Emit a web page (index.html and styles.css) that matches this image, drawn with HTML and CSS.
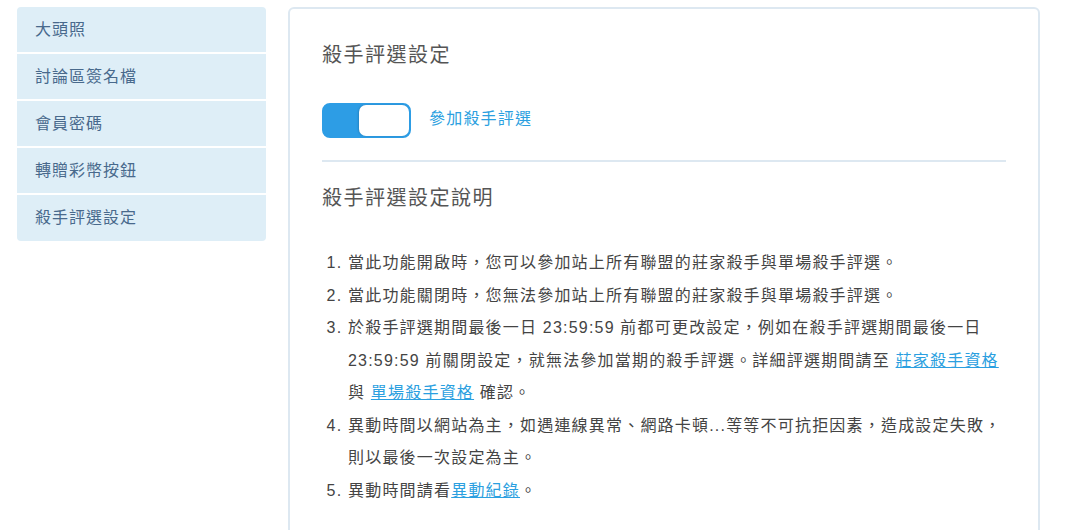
FILE: index.html
```html
<!doctype html>
<html lang="zh-Hant">
<head>
<meta charset="UTF-8">
<title>殺手評選設定</title>
<link rel="stylesheet" href="styles.css">
</head>
<body>
<div class="layout">
  <nav class="side-menu">
    <a class="menu-item" href="#">大頭照</a>
    <a class="menu-item" href="#">討論區簽名檔</a>
    <a class="menu-item" href="#">會員密碼</a>
    <a class="menu-item" href="#">轉贈彩幣按鈕</a>
    <a class="menu-item" href="#">殺手評選設定</a>
  </nav>

  <main class="panel">
    <h2 class="panel-title">殺手評選設定</h2>
    <div class="switch-row">
      <span class="switch"><span class="knob"></span></span>
      <span class="switch-label">參加殺手評選</span>
    </div>
    <hr class="divider">
    <h2 class="panel-title sub">殺手評選設定說明</h2>
    <ol class="notes">
      <li>當此功能開啟時，您可以參加站上所有聯盟的莊家殺手與單場殺手評選。</li>
      <li>當此功能關閉時，您無法參加站上所有聯盟的莊家殺手與單場殺手評選。</li>
      <li>於殺手評選期間最後一日 23:59:59 前都可更改設定，例如在殺手評選期間最後一日 23:59:59 前關閉設定，就無法參加當期的殺手評選。詳細評選期間請至 <a href="#">莊家殺手資格</a> 與 <a href="#">單場殺手資格</a> 確認。</li>
      <li>異動時間以網站為主，如遇連線異常、網路卡頓...等等不可抗拒因素，造成設定失敗，則以最後一次設定為主。</li>
      <li>異動時間請看<a href="#">異動紀錄</a>。</li>
    </ol>
  </main>
</div>
</body>
</html>
```

FILE: styles.css
```css
body {
  margin: 0;
  font-family: "Liberation Sans", "Noto Sans CJK TC", sans-serif;
  color: #444;
  background: #fff;
}
.layout {
  display: flex;
  align-items: flex-start;
  gap: 22px;
  padding: 7px 0 0 17px;
}
.side-menu {
  width: 249px;
  flex: none;
  display: flex;
  flex-direction: column;
  background: #deeef7;
  border-radius: 4px;
  overflow: hidden;
}
.menu-item {
  display: block;
  height: 45px;
  line-height: 45px;
  padding-left: 18px;
  font-size: 16px;
  letter-spacing: 1px;
  color: #48698c;
  text-decoration: none;
  border-bottom: 2px solid #fff;
}
.menu-item:last-child {
  border-bottom: none;
  height: 46px;
}
.panel {
  width: 684px;
  min-height: 600px;
  padding: 28px 32px 0 32px;
  border: 2px solid #dde8f1;
  border-radius: 6px;
}
.panel-title {
  margin: 0;
  font-size: 20px;
  font-weight: normal;
  letter-spacing: 1.5px;
  line-height: 36px;
  color: #555;
}
.switch-row {
  display: flex;
  align-items: center;
  gap: 18px;
  margin-top: 30px;
}
.switch {
  width: 89px;
  height: 35px;
  box-sizing: border-box;
  border-radius: 8px;
  background: #2d9de5;
  border: 2px solid #2d9de5;
  display: flex;
  justify-content: flex-end;
}
.knob {
  width: 50px;
  height: 31px;
  background: #fff;
  border-radius: 7px;
  box-shadow: -1px 0 2px rgba(0, 0, 0, 0.15);
}
.switch-label {
  font-size: 16px;
  letter-spacing: 1.2px;
  line-height: 20px;
  margin-top: -3px;
  color: #2b9fe0;
}
.divider {
  border: none;
  border-top: 2px solid #dde8f1;
  margin: 22px 0 0 0;
}
.panel-title.sub {
  margin-top: 18px;
}
.notes {
  margin: 31px 0 0 0;
  padding-left: 26px;
  font-size: 16px;
  letter-spacing: 1.2px;
  line-height: 32.5px;
  color: #444;
}
.notes a {
  color: #2b9fe0;
}
```
